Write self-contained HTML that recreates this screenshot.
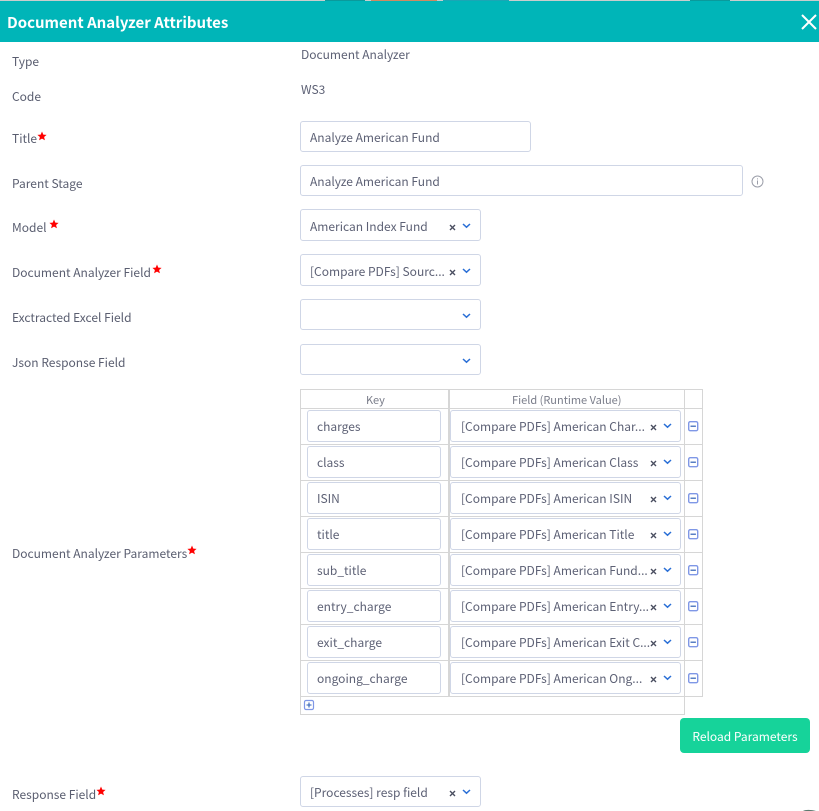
<!DOCTYPE html>
<html><head><meta charset="utf-8">
<style>
html,body{margin:0;padding:0;background:#fff}
#p{position:relative;width:819px;height:811px;overflow:hidden;background:#fff;font-family:"Noto Sans CJK JP","Liberation Sans",sans-serif;font-size:12px;color:#6b6f82}
#p div{position:absolute;box-sizing:border-box;white-space:nowrap}
.l{left:12px;height:18px;line-height:20px;color:#5a5e70}
.b{border:1px solid #cfd6e6;border-radius:3px;background:#fff;height:31px;line-height:31px;padding-left:9px;color:#5d6175}
.s{height:32px;line-height:31px}
.t{line-height:33px}
svg{position:absolute;display:block}
.g{background:#d6d6d6}
</style></head><body><div id="p">
<div style="left:0;top:0;width:819px;height:1px;background:#c9cdcd"></div>
<div style="left:325px;top:0;width:40px;height:1px;background:#0a9a9c"></div>
<div style="left:371px;top:0;width:66px;height:1px;background:#d08a62"></div>
<div style="left:443px;top:0;width:66px;height:1px;background:#1aa6b5"></div>
<div style="left:690px;top:0;width:40px;height:1px;background:#0a9a9c"></div>
<div style="left:0;top:1px;width:819px;height:41px;background:#00b5b8"></div>
<div style="left:7px;top:12px;height:22px;line-height:22px;font-size:15px;font-weight:700;color:#fff">Document Analyzer Attributes</div>
<svg style="left:800px;top:13px" width="18" height="18" viewBox="0 0 18 18"><path d="M2 2L16 16M16 2L2 16" stroke="#fff" stroke-width="2" fill="none"/></svg>

<div class="l" style="top:52px">Type</div>
<div class="l" style="top:87px">Code</div>
<div class="l" style="top:129px">Title</div>
<div class="l" style="top:174px">Parent Stage</div>
<div class="l" style="top:218px">Model</div>
<div class="l" style="top:263px">Document Analyzer Field</div>
<div class="l" style="top:308px">Exctracted Excel Field</div>
<div class="l" style="top:353px">Json Response Field</div>
<div class="l" style="top:544px">Document Analyzer Parameters</div>
<div class="l" style="top:785px">Response Field</div>

<svg style="left:37px;top:131px" width="10" height="10" viewBox="0 0 10 10"><path d="M5 .5L6.300 3.600 9.600 3.900 7.100 6 7.900 9.300 5 7.600 2.100 9.300 2.900 6 .4 3.900 3.700 3.600Z" fill="#f00"/></svg>
<svg style="left:49px;top:219px" width="10" height="10" viewBox="0 0 10 10"><path d="M5 .5L6.300 3.600 9.600 3.900 7.100 6 7.900 9.300 5 7.600 2.100 9.300 2.900 6 .4 3.900 3.700 3.600Z" fill="#f00"/></svg>
<svg style="left:152px;top:264px" width="10" height="10" viewBox="0 0 10 10"><path d="M5 .5L6.300 3.600 9.600 3.900 7.100 6 7.900 9.300 5 7.600 2.100 9.300 2.900 6 .4 3.900 3.700 3.600Z" fill="#f00"/></svg>
<svg style="left:187px;top:545px" width="10" height="10" viewBox="0 0 10 10"><path d="M5 .5L6.300 3.600 9.600 3.900 7.100 6 7.900 9.300 5 7.600 2.100 9.300 2.900 6 .4 3.900 3.700 3.600Z" fill="#f00"/></svg>
<svg style="left:96px;top:786px" width="10" height="10" viewBox="0 0 10 10"><path d="M5 .5L6.300 3.600 9.600 3.900 7.100 6 7.900 9.300 5 7.600 2.100 9.300 2.900 6 .4 3.900 3.700 3.600Z" fill="#f00"/></svg>

<div style="left:301px;top:45px;height:18px;line-height:20px;color:#5d6175">Document Analyzer</div>
<div style="left:301px;top:80px;height:18px;line-height:20px;color:#5d6175">WS3</div>

<div class="b" style="left:300px;top:121px;width:231px">Analyze American Fund</div>
<div class="b" style="left:300px;top:165px;width:443px">Analyze American Fund</div>
<svg style="left:751px;top:175px" width="13" height="13" viewBox="0 0 13 13"><circle cx="6.500" cy="6.500" r="5.500" fill="none" stroke="#9a9da8" stroke-width="1"/><path d="M6.500 5.500V9.500M6.500 3.400V4.400" stroke="#9a9da8" stroke-width="1"/></svg>

<div class="b s t" style="left:300px;top:209px;width:181px">American Index Fund</div>
<div class="b s t" style="left:300px;top:254px;width:181px">[Compare PDFs] Sourc...</div>
<div class="b" style="left:300px;top:299px;width:181px"></div>
<div class="b" style="left:300px;top:344px;width:181px"></div>
<div class="b" style="left:300px;top:776px;width:181px">[Processes] resp field</div>

<svg style="left:0;top:0" width="819" height="811" viewBox="0 0 819 811">
<defs>
<g id="c"><path d="M0 0L3.500 3.200L7 0" fill="none" stroke="#2a6fd6" stroke-width="1.500"/></g>
<g id="k"><path d="M0 0L5 5M5 0L0 5" fill="none" stroke="#4a4e60" stroke-width="1.400"/></g>
<g id="m"><rect x=".7" y=".7" width="9" height="9" rx="1.500" fill="#fff" stroke="#7f97e6" stroke-width="1.400"/><path d="M2.500 5.200H7.900" stroke="#2f5fb5" stroke-width="1.200"/></g>
</defs>
<use href="#k" x="450" y="225"/><use href="#c" x="463" y="224"/>
<use href="#k" x="450" y="270"/><use href="#c" x="463" y="269"/>
<use href="#c" x="463" y="314"/>
<use href="#c" x="463" y="359"/>
<use href="#k" x="450" y="791"/><use href="#c" x="463" y="790"/>
</svg>

<div class="g" style="left:300px;top:389px;width:403px;height:1px"></div>
<div class="g" style="left:300px;top:408px;width:403px;height:1px"></div>
<div class="g" style="left:300px;top:444px;width:403px;height:1px"></div>
<div class="g" style="left:300px;top:480px;width:403px;height:1px"></div>
<div class="g" style="left:300px;top:516px;width:403px;height:1px"></div>
<div class="g" style="left:300px;top:552px;width:403px;height:1px"></div>
<div class="g" style="left:300px;top:588px;width:403px;height:1px"></div>
<div class="g" style="left:300px;top:624px;width:403px;height:1px"></div>
<div class="g" style="left:300px;top:660px;width:403px;height:1px"></div>
<div class="g" style="left:300px;top:696px;width:403px;height:1px"></div>
<div class="g" style="left:300px;top:714px;width:385px;height:1px"></div>
<div class="g" style="left:300px;top:389px;width:1px;height:326px"></div>
<div class="g" style="left:448px;top:389px;width:2px;height:308px"></div>
<div class="g" style="left:684px;top:389px;width:1px;height:326px"></div>
<div class="g" style="left:702px;top:389px;width:1px;height:308px"></div>

<div style="left:366px;top:391px;height:17px;line-height:19px;font-size:11px;color:#7a7d8a">Key</div>
<div style="left:512px;top:391px;height:17px;line-height:19px;font-size:11px;color:#7a7d8a">Field (Runtime Value)</div>

<div class="b s" style="left:307px;top:410px;width:134px;padding-left:9px">charges</div>
<div class="b s" style="left:450px;top:410px;width:231px;padding-left:10px">[Compare PDFs] American Char...</div>
<div class="b s" style="left:307px;top:446px;width:134px;padding-left:9px">class</div>
<div class="b s" style="left:450px;top:446px;width:231px;padding-left:10px">[Compare PDFs] American Class</div>
<div class="b s" style="left:307px;top:482px;width:134px;padding-left:9px">ISIN</div>
<div class="b s" style="left:450px;top:482px;width:231px;padding-left:10px">[Compare PDFs] American ISIN</div>
<div class="b s" style="left:307px;top:518px;width:134px;padding-left:9px">title</div>
<div class="b s" style="left:450px;top:518px;width:231px;padding-left:10px">[Compare PDFs] American Title</div>
<div class="b s" style="left:307px;top:554px;width:134px;padding-left:9px">sub_title</div>
<div class="b s" style="left:450px;top:554px;width:231px;padding-left:10px">[Compare PDFs] American Fund...</div>
<div class="b s" style="left:307px;top:590px;width:134px;padding-left:9px">entry_charge</div>
<div class="b s" style="left:450px;top:590px;width:231px;padding-left:10px">[Compare PDFs] American Entry...</div>
<div class="b s" style="left:307px;top:626px;width:134px;padding-left:9px">exit_charge</div>
<div class="b s" style="left:450px;top:626px;width:231px;padding-left:10px">[Compare PDFs] American Exit C...</div>
<div class="b s" style="left:307px;top:662px;width:134px;padding-left:9px">ongoing_charge</div>
<div class="b s" style="left:450px;top:662px;width:231px;padding-left:10px">[Compare PDFs] American Ong...</div>

<svg style="left:0;top:0" width="819" height="811" viewBox="0 0 819 811">
<use href="#k" x="651" y="425"/><use href="#c" x="664" y="424"/><use href="#m" x="688" y="421"/>
<use href="#k" x="651" y="461"/><use href="#c" x="664" y="460"/><use href="#m" x="688" y="457"/>
<use href="#k" x="651" y="497"/><use href="#c" x="664" y="496"/><use href="#m" x="688" y="493"/>
<use href="#k" x="651" y="533"/><use href="#c" x="664" y="532"/><use href="#m" x="688" y="529"/>
<use href="#k" x="651" y="569"/><use href="#c" x="664" y="568"/><use href="#m" x="688" y="565"/>
<use href="#k" x="651" y="605"/><use href="#c" x="664" y="604"/><use href="#m" x="688" y="601"/>
<use href="#k" x="651" y="641"/><use href="#c" x="664" y="640"/><use href="#m" x="688" y="637"/>
<use href="#k" x="651" y="677"/><use href="#c" x="664" y="676"/><use href="#m" x="688" y="673"/>
<rect x="304.500" y="700.500" width="9" height="9" rx="1.500" fill="#fff" stroke="#7f97e6" stroke-width="1.200"/><path d="M306.500 705H311.500M309 702.500V707.500" stroke="#2f5fb5" stroke-width="1.100"/>
<path d="M803 811C805 809.500 811 809.500 816 811Z" fill="#5d7a70"/>
</svg>

<div style="left:680px;top:718px;width:130px;height:35px;background:#16d39a;border-radius:4px;color:#fff;text-align:center;line-height:37px">Reload Parameters</div>
</div></body></html>
